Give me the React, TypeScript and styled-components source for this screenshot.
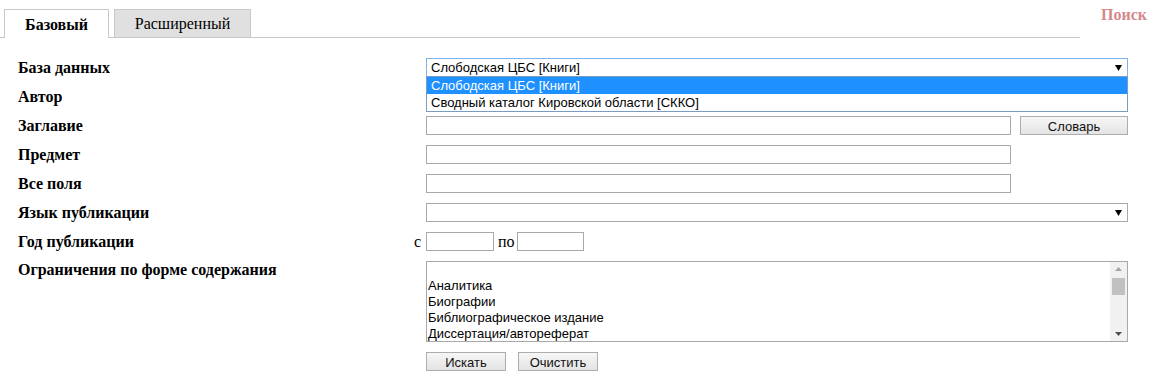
import React from 'react';
import styled, { createGlobalStyle } from 'styled-components';

const Global = createGlobalStyle`
	body {
		margin: 0;
		background: #fff;
		font-family: 'Liberation Serif', 'Times New Roman', serif;
		color: #000;
	}
`;

const Page = styled.div`
	width: 1153px;
	height: 385px;
	overflow: hidden;
`;

const Header = styled.div`
	display: flex;
	align-items: flex-start;
	padding-top: 6px;
`;

const TabBar = styled.div`
	display: flex;
	align-items: flex-end;
	gap: 5px;
	width: 1080px;
	height: 32px;
	padding-left: 4px;
	box-sizing: border-box;
	border-bottom: 1px solid #c8c8c8;
`;

const Tab = styled.div<{ active?: boolean }>`
	display: flex;
	align-items: center;
	justify-content: center;
	width: ${p => (p.active ? '105px' : '137px')};
	height: ${p => (p.active ? '29px' : '28px')};
	box-sizing: border-box;
	border: 1px solid #c8c8c8;
	border-bottom: none;
	margin-bottom: ${p => (p.active ? '-1px' : '0')};
	background: ${p => (p.active ? '#fff' : '#e0e0e0')};
	font-size: 16px;
	font-weight: ${p => (p.active ? 'bold' : 'normal')};
	padding-top: 1px;
`;

const SearchLink = styled.div`
	margin-left: 21px;
	font-size: 16px;
	font-weight: bold;
	color: #d48a8a;
`;

const Form = styled.div`
	padding: 15px 0 0 18px;
`;

const Row = styled.div<{ top?: boolean }>`
	display: grid;
	grid-template-columns: 390px 18px 702px;
	align-items: ${p => (p.top ? 'start' : 'center')};
	height: ${p => (p.top ? 'auto' : '29px')};
	padding-top: ${p => (p.top ? '5px' : '0')};
`;

const Label = styled.div`
	font-size: 16px;
	font-weight: bold;
	line-height: 18px;
`;

const Prefix = styled.div`
	font-size: 16px;
	text-align: right;
	padding-right: 5px;
`;

const Field = styled.div<{ tight?: boolean }>`
	position: relative;
	display: flex;
	align-items: center;
	gap: ${p => (p.tight ? '4px' : '9px')};
	font-size: 16px;
`;

const YearWord = styled.span`
	margin-right: -2px;
`;

const Input = styled.div<{ w: number }>`
	width: ${p => p.w}px;
	height: 19px;
	box-sizing: border-box;
	border: 1px solid #a9a9a9;
	background: #fff;
`;

const Select = styled.div<{ focused?: boolean }>`
	display: flex;
	align-items: center;
	justify-content: space-between;
	width: 702px;
	height: 19px;
	box-sizing: border-box;
	border: 1px solid ${p => (p.focused ? '#7eb4ea' : '#a9a9a9')};
	padding: 0 5px 0 4px;
	font-family: 'Liberation Sans', Arial, sans-serif;
	font-size: 13px;
	background: #fff;
`;

const Arrow = styled.span`
	display: flex;
	align-items: center;
`;

const DropList = styled.div`
	position: absolute;
	left: 0;
	top: 18px;
	width: 702px;
	box-sizing: border-box;
	border: 1px solid #7a9cc4;
	background: #fff;
	z-index: 2;
	font-family: 'Liberation Sans', Arial, sans-serif;
	font-size: 13px;
`;

const DropOption = styled.div<{ selected?: boolean }>`
	height: 17px;
	line-height: 17px;
	padding-left: 4px;
	background: ${p => (p.selected ? '#1e90ff' : '#fff')};
	color: ${p => (p.selected ? '#fff' : '#000')};
`;

const Button = styled.div<{ w: number }>`
	display: flex;
	align-items: center;
	justify-content: center;
	width: ${p => p.w}px;
	height: 19px;
	box-sizing: border-box;
	border: 1px solid #adadad;
	background: linear-gradient(#f6f6f6, #e4e4e4);
	font-family: 'Liberation Sans', Arial, sans-serif;
	font-size: 13px;
	color: #111;
	padding-top: 1px;
`;

const ListBox = styled.div`
	display: flex;
	width: 702px;
	height: 81px;
	box-sizing: border-box;
	border: 1px solid #a9a9a9;
	background: #fff;
`;

const ListItems = styled.div`
	flex: 1;
	font-family: 'Liberation Sans', Arial, sans-serif;
	font-size: 13px;
	line-height: 16px;
	padding-left: 1px;
`;

const ListItem = styled.div`
	height: 16px;
`;

const ScrollTrack = styled.div`
	display: flex;
	flex-direction: column;
	align-items: center;
	width: 17px;
	background: #f1f1f1;
`;

const ScrollArrow = styled.div<{ dark?: boolean }>`
	height: 14px;
	display: flex;
	align-items: center;
	justify-content: center;
	color: ${p => (p.dark ? '#505050' : '#a3a3a3')};
`;

const Thumb = styled.div`
	width: 13px;
	height: 17px;
	margin-top: 2px;
	background: #c1c1c1;
`;

const Spacer = styled.div`
	flex: 1;
`;

const Actions = styled.div`
	display: flex;
	gap: 12px;
	margin: 10px 0 0 408px;
`;

const Tri: React.FC<{ up?: boolean }> = ({ up }) => (
	<svg width="7" height="4" viewBox="0 0 7 4">
		<path d={up ? 'M0 4 L3.5 0 L7 4 Z' : 'M0 0 L7 0 L3.5 4 Z'} fill="currentColor" />
	</svg>
);

const SelArrow = () => (
	<Arrow>
		<svg width="7" height="6" viewBox="0 0 7 6">
			<path d="M0 0 L7 0 L3.5 6 Z" fill="#000" />
		</svg>
	</Arrow>
);

const listItems = ['', 'Аналитика', 'Биографии', 'Библиографическое издание', 'Диссертация/автореферат'];

const App: React.FC = () => {
	return (
		<Page>
			<Global />
			<Header>
				<TabBar>
					<Tab active>Базовый</Tab>
					<Tab>Расширенный</Tab>
				</TabBar>
				<SearchLink>Поиск</SearchLink>
			</Header>
			<Form>
				<Row>
					<Label>База данных</Label>
					<div />
					<Field>
						<Select focused>
							<span>Слободская ЦБС [Книги]</span>
							<SelArrow />
						</Select>
						<DropList>
							<DropOption selected>Слободская ЦБС [Книги]</DropOption>
							<DropOption>Сводный каталог Кировской области [СККО]</DropOption>
						</DropList>
					</Field>
				</Row>
				<Row>
					<Label>Автор</Label>
					<div />
					<Field>
						<Input w={585} />
					</Field>
				</Row>
				<Row>
					<Label>Заглавие</Label>
					<div />
					<Field>
						<Input w={585} />
						<Button w={108}>Словарь</Button>
					</Field>
				</Row>
				<Row>
					<Label>Предмет</Label>
					<div />
					<Field>
						<Input w={585} />
					</Field>
				</Row>
				<Row>
					<Label>Все поля</Label>
					<div />
					<Field>
						<Input w={585} />
					</Field>
				</Row>
				<Row>
					<Label>Язык публикации</Label>
					<div />
					<Field>
						<Select>
							<span />
							<SelArrow />
						</Select>
					</Field>
				</Row>
				<Row>
					<Label>Год публикации</Label>
					<Prefix>с</Prefix>
					<Field tight>
						<Input w={68} />
						<YearWord>по</YearWord>
						<Input w={67} />
					</Field>
				</Row>
				<Row top>
					<Label>Ограничения по форме содержания</Label>
					<div />
					<Field>
						<ListBox>
							<ListItems>
								{listItems.map((t, i) => (
									<ListItem key={i}>{t}</ListItem>
								))}
							</ListItems>
							<ScrollTrack>
								<ScrollArrow>
									<Tri up />
								</ScrollArrow>
								<Thumb />
								<Spacer />
								<ScrollArrow dark>
									<Tri />
								</ScrollArrow>
							</ScrollTrack>
						</ListBox>
					</Field>
				</Row>
				<Actions>
					<Button w={80}>Искать</Button>
					<Button w={80}>Очистить</Button>
				</Actions>
			</Form>
		</Page>
	);
};

export default App;
